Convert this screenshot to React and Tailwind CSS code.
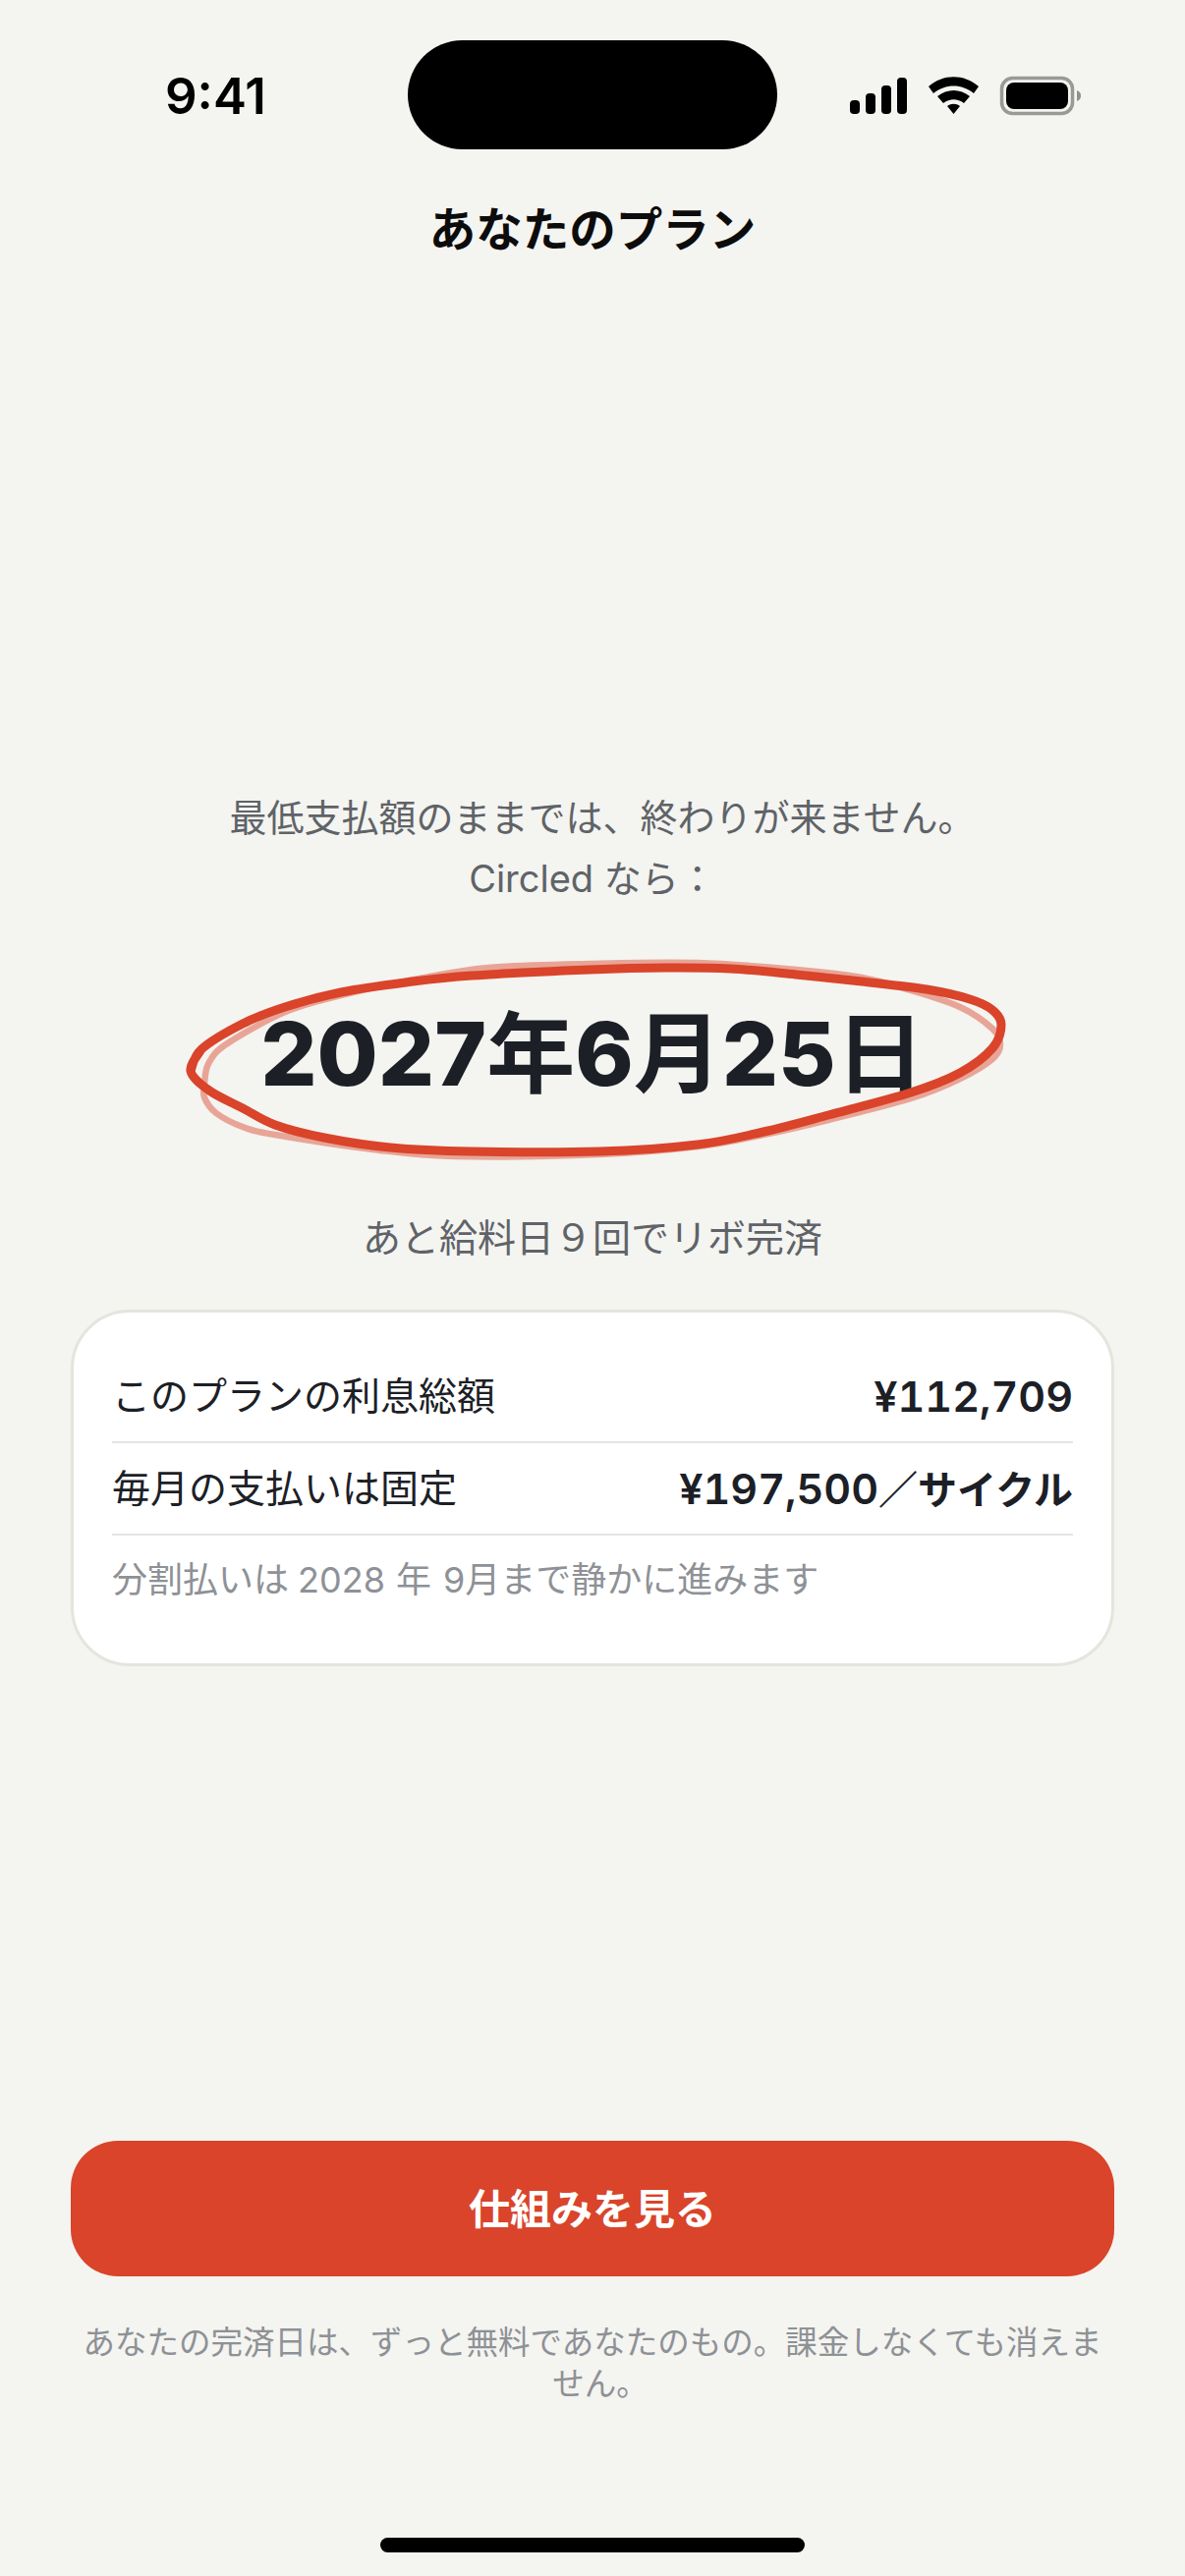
const FONT = "font-['Inter','Noto_Sans_CJK_JP',sans-serif]";

const MAIN = [[194,1090],[205,1068],[247,1042],[290,1025],[347,1010],[413,1000],[480,993],[600,987],[677,985],[743,986],[810,992],[877,999],[943,1007],[987,1017],[1010,1028],[1019,1043],[1010,1067],[977,1092],[927,1112],[843,1135],[777,1152],[710,1165],[610,1172],[480,1172],[397,1168],[330,1158],[280,1145],[247,1128],[213,1110],[194,1090],[205,1068]];
const SOFT = [[208,1103],[212,1083],[230,1063],[290,1030],[347,1013],[427,996],[497,985],[600,981],[710,980],[810,987],[877,995],[927,1008],[977,1025],[1010,1047],[1018,1063],[1010,1078],[977,1098],[927,1118],[843,1140],[777,1155],[710,1167],[610,1175],[463,1177],[380,1170],[280,1155],[247,1147],[220,1133],[208,1117],[208,1103]];

function smooth(p) {
  let d = `M${p[0][0]} ${p[0][1]}`;
  for (let i = 0; i < p.length - 1; i++) {
    const a = p[Math.max(i - 1, 0)], b = p[i], c = p[i + 1], e = p[Math.min(i + 2, p.length - 1)];
    d += ` C${b[0] + (c[0] - a[0]) / 6} ${b[1] + (c[1] - a[1]) / 6} ${c[0] - (e[0] - b[0]) / 6} ${c[1] - (e[1] - b[1]) / 6} ${c[0]} ${c[1]}`;
  }
  return d;
}

function StatusIcons() {
  return (
    <svg width="240" height="44" viewBox="0 0 240 44" className="block">
      <g fill="#000">
        <rect x="5" y="25" width="10" height="14" rx="4" />
        <rect x="21" y="18" width="10" height="21" rx="4" />
        <rect x="37" y="10" width="10" height="29" rx="4" />
        <rect x="53" y="2" width="10" height="37" rx="4" />
        <path d="M85 11 C100 -2 121 -2 136 11 L131 18 C119 8 102 8 90 18 Z" />
        <path d="M94 21 C104 13 117 13 127 21 L121 28 C114 23 107 23 100 28 Z" />
        <path d="M104 31 C108 28 113 28 117 31 L110.5 39 Z" />
        <rect x="164" y="7" width="63" height="27" rx="8" />
        <path d="M236 15 C239 16 240 18 240 20.5 C240 23 239 25 236 26 Z" fill="#8f8f8c" />
      </g>
      <rect x="159.5" y="2.5" width="72" height="36" rx="11" fill="none" stroke="#999996" strokeWidth="3.5" />
    </svg>
  );
}

export default function App() {
  return (
    <div className={`relative flex h-[2622px] w-[1206px] flex-col overflow-hidden bg-[#f4f4f0] ${FONT}`}>
      <div className="absolute left-[415px] top-[41px] h-[111px] w-[376px] rounded-full bg-black" />

      <div className="flex h-[196px] items-start justify-between pl-[168px] pr-[106px] pt-[68px]">
        <span className="text-[51px] font-semibold leading-[60px] text-black">9:41</span>
        <div className="mt-[9px]"><StatusIcons /></div>
      </div>

      <h1 className="text-center text-[47.5px] font-bold leading-[76px] text-[#0c0c0c]">あなたのプラン</h1>

      <div className="mt-[529px] text-center text-[38px] leading-[62px] text-[#5f6368]">
        <p className="pl-[20px]">最低支払額のままでは、終わりが来ません。</p>
        <p>Circled なら：</p>
      </div>

      <div className="relative mt-[71px] h-[150px]">
        <p className="text-center text-[90px] font-extrabold leading-[153px] text-[#1c2026]">
          2027<span className="font-bold">年</span>6<span className="font-bold">月</span>25<span className="font-bold">日</span>
        </p>
        <svg className="absolute left-0 top-[-996px] h-[1300px] w-[1206px]" viewBox="0 0 1206 1300" fill="none">
          <path d={smooth(SOFT)} stroke="#d9442a" strokeOpacity="0.45" strokeWidth="6.5" strokeLinecap="round" />
          <path d={smooth(MAIN)} stroke="#d9442a" strokeWidth="9" strokeLinecap="round" />
        </svg>
      </div>

      <p className="mt-[83px] text-center text-[39px] leading-[62px] text-[#5f6368]">あと給料日９回でリボ完済</p>

      <div className="mx-[72px] mt-[42px] h-[363px] rounded-[60px] border-[3px] border-[#e5e5de] bg-white px-[39px] pt-[39px]">
        <div className="flex h-[94px] items-center justify-between border-b-2 border-[#e4e4e6]">
          <span className="text-[39px] font-normal text-[#1c2026]">このプランの利息総額</span>
          <span className="text-[43px] font-semibold tabular-nums text-[#1c2026]">¥112,709</span>
        </div>
        <div className="flex h-[94px] items-center justify-between border-b-2 border-[#e4e4e6]">
          <span className="text-[39px] font-normal text-[#1c2026]">毎月の支払いは固定</span>
          <span className="text-[43px] font-semibold tabular-nums text-[#1c2026]">¥197,500<span className="text-[40px]">／サイクル</span></span>
        </div>
        <p className="pt-[10px] text-[36px] leading-[70px] text-[#8e9196]">
          分割払いは<span className="ml-[9px] mr-[11px]">2028</span>年<span className="ml-[12px]">9</span>月まで静かに進みます
        </p>
      </div>

      <button className="mx-[72px] mt-[483px] h-[138px] rounded-[48px] bg-[#d9442a] text-[42px] font-bold text-white">仕組みを見る</button>

      <p className="mx-[72px] mt-[47px] whitespace-nowrap text-center text-[32.5px] leading-[42px] text-[#8e9196]">
        <span className="block">あなたの完済日は、ずっと無料であなたのもの。課金しなくても消えま</span>
        <span className="block pl-[16px]">せん。</span>
      </p>

      <div className="absolute bottom-[24px] left-[387px] h-[15px] w-[432px] rounded-full bg-black" />
    </div>
  );
}
